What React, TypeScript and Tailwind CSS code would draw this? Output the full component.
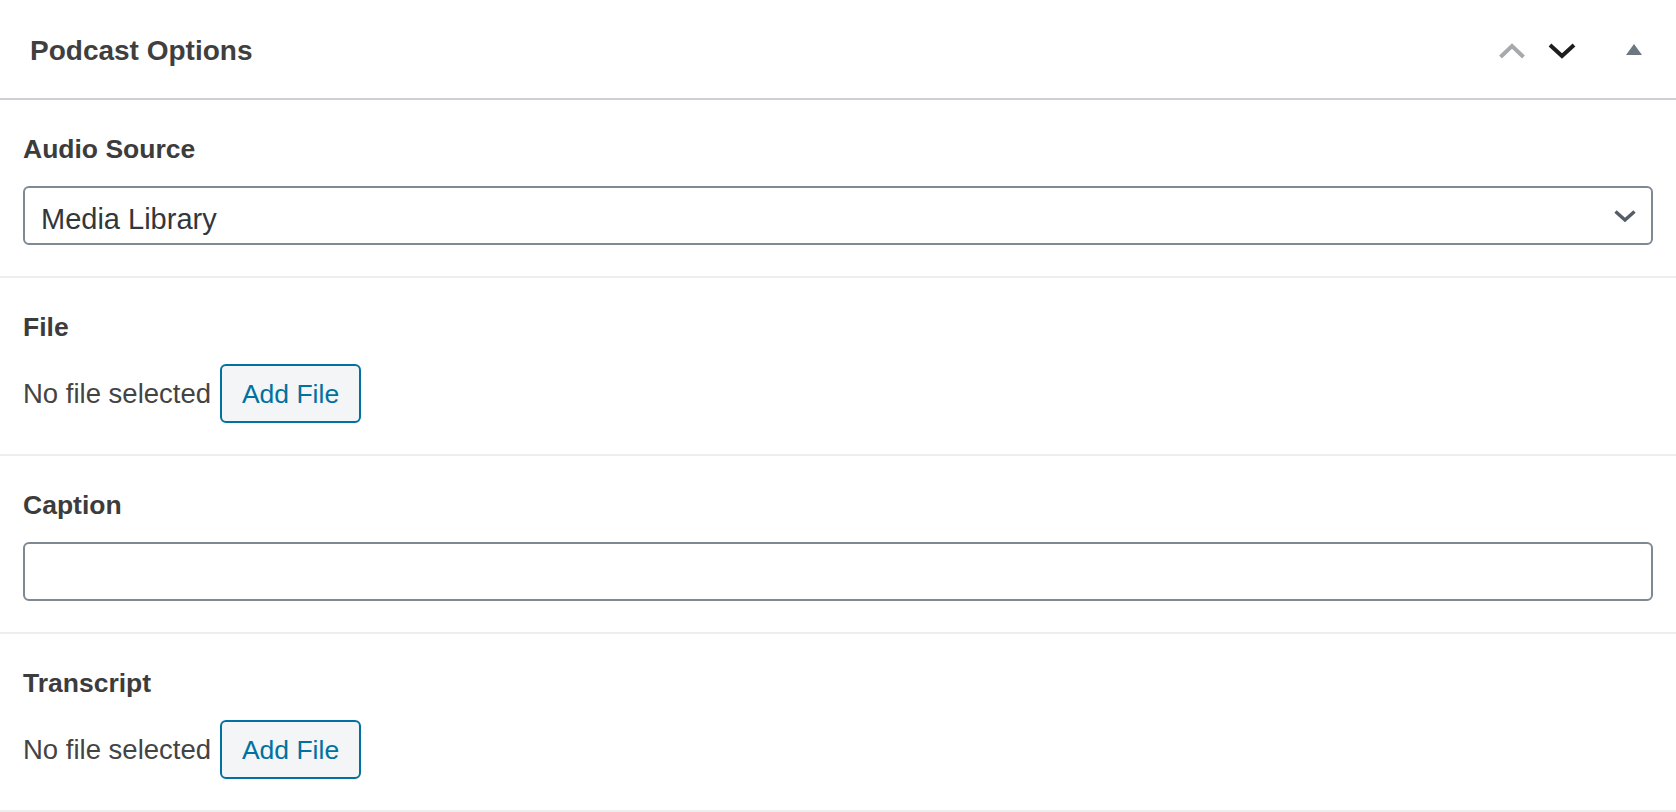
import { ReactNode } from 'react'

const FONT = { fontFamily: '"Liberation Sans", Arial, sans-serif' }

function Section({ label, children }: { label: string; children: ReactNode }) {
  return (
    <div className="px-[23px] pt-[33px] pb-[31px] border-b-2 border-[#eeeeee]">
      <div className="text-[26.5px] leading-[32px] font-bold text-[#3c3c3c] mb-[21px]">{label}</div>
      {children}
    </div>
  )
}

function FilePicker() {
  return (
    <div className="flex items-baseline">
      <span className="text-[27.5px] leading-[32px] text-[#444444]">No file selected</span>
      <button className="ml-[9px] w-[141px] h-[59px] flex items-center justify-center border-2 border-[#0071a1] bg-[#f3f5f6] rounded-[6px] text-[26.5px] leading-[30px] text-[#0071a1]">
        Add File
      </button>
    </div>
  )
}

export default function App() {
  return (
    <div className="w-[1676px] h-[812px] bg-white overflow-hidden" style={FONT}>
      {/* header */}
      <div className="h-[100px] flex items-center border-b-2 border-[#ccd0d4] pl-[30px] pr-[18px] pt-[4px]">
        <h2 className="flex-1 text-[28px] leading-[32px] font-bold text-[#3f3f3f]">Podcast Options</h2>
        <button className="w-[48px] h-[48px] flex items-center justify-center" aria-label="Move up">
          <svg width="28" height="16" viewBox="0 0 28 16" fill="none">
            <polyline points="2.5,14 14,3 25.5,14" stroke="#a7aaad" strokeWidth="4" />
          </svg>
        </button>
        <button className="ml-[2px] w-[48px] h-[48px] flex items-center justify-center" aria-label="Move down">
          <svg width="28" height="16" viewBox="0 0 28 16" fill="none">
            <polyline points="2,2 14,13 26,2" stroke="#1e1e1e" strokeWidth="4" />
          </svg>
        </button>
        <button className="ml-[24px] w-[48px] h-[48px] flex items-center justify-center pb-[3px]" aria-label="Toggle panel">
          <svg width="16" height="11" viewBox="0 0 16 11">
            <polygon points="8,0 16,11 0,11" fill="#6c7781" />
          </svg>
        </button>
      </div>

      <Section label="Audio Source">
        <div className="h-[59px] flex items-center justify-between border-2 border-[#7e8993] rounded-[6px] pl-[16px] pr-[15px] pt-[6px]">
          <span className="text-[29px] leading-[32px] text-[#32373c]">Media Library</span>
          <svg width="22" height="12" viewBox="0 0 22 12" fill="none" className="-mt-[6px]">
            <polyline points="1.5,1.5 11,10 20.5,1.5" stroke="#555d66" strokeWidth="3.4" />
          </svg>
        </div>
      </Section>

      <Section label="File">
        <FilePicker />
      </Section>

      <Section label="Caption">
        <input className="w-full h-[59px] border-2 border-[#7e8993] rounded-[6px] px-[15px] text-[28px] text-[#32373c] outline-none" />
      </Section>

      <Section label="Transcript">
        <FilePicker />
      </Section>
    </div>
  )
}
